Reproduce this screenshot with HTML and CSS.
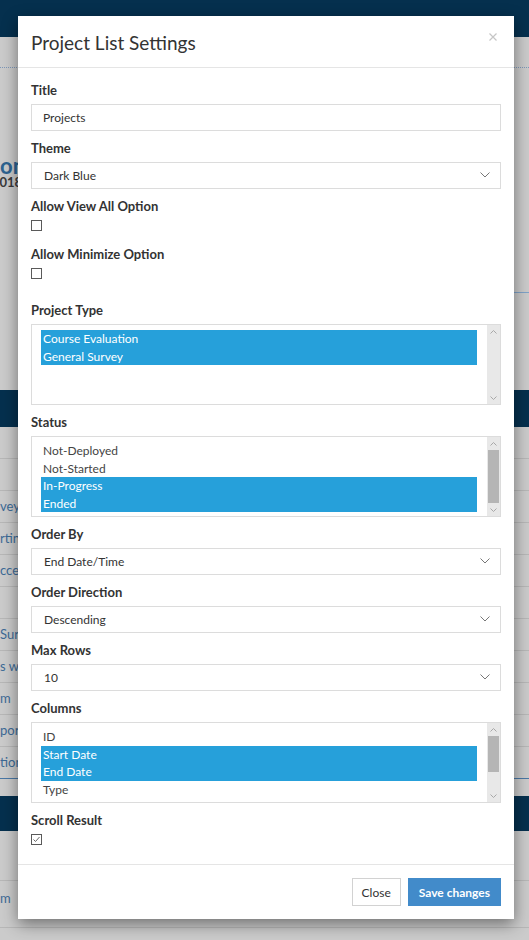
FILE: index.html
```html
<html>

<head>
	<title>Project List Settings</title>
	<link rel="stylesheet" href="styles.css">
</head>
<body>
	<div class="page">
		<div class="topbar"></div>
		<div class="crumbs"></div>
		<div class="welcome">
			<h1>on</h1>
			<p>2018</p>
		</div>
		<div class="side-rule"></div>
		<div class="band"></div>
		<div class="grid">
			<div class="grid-row"></div>
			<div class="grid-row"></div>
			<div class="grid-row">veys</div>
			<div class="grid-row">rtin</div>
			<div class="grid-row">cces</div>
			<div class="grid-row"></div>
			<div class="grid-row">Surv</div>
			<div class="grid-row">s wi</div>
			<div class="grid-row">m</div>
			<div class="grid-row">port</div>
			<div class="grid-row">tion</div>
		</div>
		<div class="band band-low"></div>
		<div class="grid">
			<div class="grid-row grid-row-tall"></div>
			<div class="grid-row grid-row-last">m</div>
		</div>
	</div>

	<div class="modal">
		<div class="modal-header">
			<h4 class="modal-title">Project List Settings</h4>
			<button type="button" class="close-x" aria-label="Close">
				<svg width="8" height="8" viewBox="0 0 8 8"><path d="M0.5 0.5L7.5 7.5M7.5 0.5L0.5 7.5" stroke="#c6c6c6" stroke-width="1.2" fill="none"/></svg>
			</button>
		</div>
		<div class="modal-body">
			<div class="form-group">
				<label>Title</label>
				<input type="text" class="form-control" value="Projects">
			</div>
			<div class="form-group">
				<label>Theme</label>
				<div class="select-wrap">
					<select class="form-control"><option>Dark Blue</option></select>
					<svg class="caret" width="10" height="6" viewBox="0 0 10 6"><path d="M0.5 0.5L5 5L9.5 0.5" stroke="#777" stroke-width="1" fill="none"/></svg>
				</div>
			</div>
			<div class="form-group">
				<label>Allow View All Option</label>
				<div class="check-row"><span class="check"></span></div>
			</div>
			<div class="form-group form-group-spaced">
				<label>Allow Minimize Option</label>
				<div class="check-row"><span class="check"></span></div>
			</div>
			<div class="form-group">
				<label>Project Type</label>
				<div class="listbox" role="listbox">
					<div class="options">
						<div class="opt selected">Course Evaluation</div>
						<div class="opt selected">General Survey</div>
					</div>
					<div class="scrollbar">
						<span class="arrow"><svg width="7" height="4" viewBox="0 0 7 4"><path d="M0.5 3.5L3.5 0.5L6.5 3.5" stroke="#a8a8a8" fill="none"/></svg></span>
						<span class="track"></span>
						<span class="arrow"><svg width="7" height="4" viewBox="0 0 7 4"><path d="M0.5 0.5L3.5 3.5L6.5 0.5" stroke="#a8a8a8" fill="none"/></svg></span>
					</div>
				</div>
			</div>
			<div class="form-group">
				<label>Status</label>
				<div class="listbox" role="listbox">
					<div class="options">
						<div class="opt">Not-Deployed</div>
						<div class="opt">Not-Started</div>
						<div class="opt selected">In-Progress</div>
						<div class="opt selected">Ended</div>
					</div>
					<div class="scrollbar">
						<span class="arrow"><svg width="7" height="4" viewBox="0 0 7 4"><path d="M0.5 3.5L3.5 0.5L6.5 3.5" stroke="#a8a8a8" fill="none"/></svg></span>
						<span class="track"><span class="thumb" style="height:53px"></span></span>
						<span class="arrow"><svg width="7" height="4" viewBox="0 0 7 4"><path d="M0.5 0.5L3.5 3.5L6.5 0.5" stroke="#a8a8a8" fill="none"/></svg></span>
					</div>
				</div>
			</div>
			<div class="form-group">
				<label>Order By</label>
				<div class="select-wrap">
					<select class="form-control"><option>End Date/Time</option></select>
					<svg class="caret" width="10" height="6" viewBox="0 0 10 6"><path d="M0.5 0.5L5 5L9.5 0.5" stroke="#777" stroke-width="1" fill="none"/></svg>
				</div>
			</div>
			<div class="form-group">
				<label>Order Direction</label>
				<div class="select-wrap">
					<select class="form-control"><option>Descending</option></select>
					<svg class="caret" width="10" height="6" viewBox="0 0 10 6"><path d="M0.5 0.5L5 5L9.5 0.5" stroke="#777" stroke-width="1" fill="none"/></svg>
				</div>
			</div>
			<div class="form-group">
				<label>Max Rows</label>
				<div class="select-wrap">
					<select class="form-control"><option>10</option></select>
					<svg class="caret" width="10" height="6" viewBox="0 0 10 6"><path d="M0.5 0.5L5 5L9.5 0.5" stroke="#777" stroke-width="1" fill="none"/></svg>
				</div>
			</div>
			<div class="form-group">
				<label>Columns</label>
				<div class="listbox" role="listbox">
					<div class="options">
						<div class="opt">ID</div>
						<div class="opt selected">Start Date</div>
						<div class="opt selected">End Date</div>
						<div class="opt">Type</div>
						<div class="opt">Current Status</div>
					</div>
					<div class="scrollbar">
						<span class="arrow"><svg width="7" height="4" viewBox="0 0 7 4"><path d="M0.5 3.5L3.5 0.5L6.5 3.5" stroke="#a8a8a8" fill="none"/></svg></span>
						<span class="track"><span class="thumb" style="height:36px"></span></span>
						<span class="arrow"><svg width="7" height="4" viewBox="0 0 7 4"><path d="M0.5 0.5L3.5 3.5L6.5 0.5" stroke="#a8a8a8" fill="none"/></svg></span>
					</div>
				</div>
			</div>
			<div class="form-group form-group-last">
				<label>Scroll Result</label>
				<div class="check-row">
					<span class="check"><svg width="9" height="9" viewBox="0 0 9 9"><path d="M1.5 4.5L3.5 6.5L7.5 2" stroke="#666" stroke-width="1" fill="none"/></svg></span>
				</div>
			</div>
		</div>
		<div class="modal-footer">
			<button type="button" class="btn btn-default">Close</button>
			<button type="button" class="btn btn-primary">Save changes</button>
		</div>
	</div>
</body>

</html>
```

FILE: styles.css
```css
body { margin: 0; background: #cbcbcb; font-family: Lato, "Open Sans", sans-serif; color: #333; }

/* page behind the dialog */
.topbar { height: 37px; background: #05304e; }
.crumbs { height: 30px; border-bottom: 1px dotted #7d97b8; }
.welcome { padding-top: 88px; }
.welcome h1 { margin: 0; font-size: 22px; line-height: 20px; font-weight: 700; color: #2d6390; }
.welcome p { margin: 0; font-size: 13px; line-height: 13px; font-weight: 700; color: #3a3a3a; text-indent: -8px; }
.side-rule { height: 1px; margin: 103px 0 0 60%; background: #7fa3c8; }
.band { height: 37px; margin-top: 97px; background: #05304e; }
.band-low { height: 35px; margin-top: 17px; }
.grid-row { height: 31px; line-height: 31px; border-bottom: 1px solid #b7b7b7; font-size: 13px; color: #3d6a96; }
.grid-row:nth-child(11) { border-bottom-color: #4a78a6; }
.grid-row-tall { height: 49px; }
.grid-row-last { height: 46px; line-height: 34px; }

/* dialog */
.modal { position: absolute; top: 16px; left: 18px; width: 496px; background: #fff; box-shadow: 0 5px 15px rgba(0,0,0,.45); }
.modal-header { position: relative; height: 48px; padding: 3px 13px 0; border-bottom: 1px solid #e5e5e5; }
.modal-title { margin: 0; font-size: 19px; line-height: 48px; font-weight: 400; color: #333; }
.close-x { position: absolute; top: 17px; right: 17px; padding: 0; border: 0; background: none; line-height: 0; }
.modal-body { padding: 14px 13px 13px; }
.form-group { margin-bottom: 9px; }
.form-group-spaced { margin-bottom: 17px; }
.form-group-last { margin-bottom: 0; }
.form-group > label { display: block; margin-bottom: 5px; font-size: 13px; line-height: 17px; font-weight: 700; color: #333; }

.form-control { display: block; box-sizing: border-box; width: 100%; height: 27px; margin: 0; padding: 0 11px; border: 1px solid #dcdcdc; border-radius: 0; background: #fff; font-family: Lato, "Open Sans", sans-serif; font-size: 12px; color: #333; outline: none; }
.select-wrap { position: relative; }
.select-wrap select { -webkit-appearance: none; appearance: none; padding-left: 12px; }
.select-wrap .caret { position: absolute; top: 10px; right: 11px; }

.check-row { height: 17px; }
.check { display: flex; align-items: center; justify-content: center; box-sizing: border-box; width: 11px; height: 11px; margin-top: 3px; border: 1px solid #5a5a5a; background: #fff; }

.listbox { display: flex; box-sizing: border-box; height: 81px; border: 1px solid #dcdcdc; background: #fff; }
.options { flex: 1; padding: 5px 9px 0; overflow: hidden; }
.opt { padding-left: 2px; font-size: 12px; line-height: 17.5px; color: #444; white-space: nowrap; }
.opt.selected { background: #26a0da; color: #fff; }
.scrollbar { display: flex; flex-direction: column; width: 13px; margin-left: 1px; background: #e8e8e8; }
.arrow { display: flex; align-items: center; justify-content: center; height: 13px; }
.track { flex: 1; }
.thumb { display: block; margin: 0 1px; background: #b5b5b5; }

.modal-footer { display: flex; justify-content: flex-end; gap: 7px; padding: 13px; border-top: 1px solid #e5e5e5; }
.btn { height: 28px; padding: 0 9px; border: 1px solid #d2d2d2; border-radius: 0; font-family: Lato, "Open Sans", sans-serif; font-size: 12px; cursor: pointer; }
.btn-default { background: #fff; color: #333; }
.btn-primary { padding: 0 10px; border-color: #428bca; background: #428bca; color: #fff; font-weight: 700; font-size: 12px; }
```
